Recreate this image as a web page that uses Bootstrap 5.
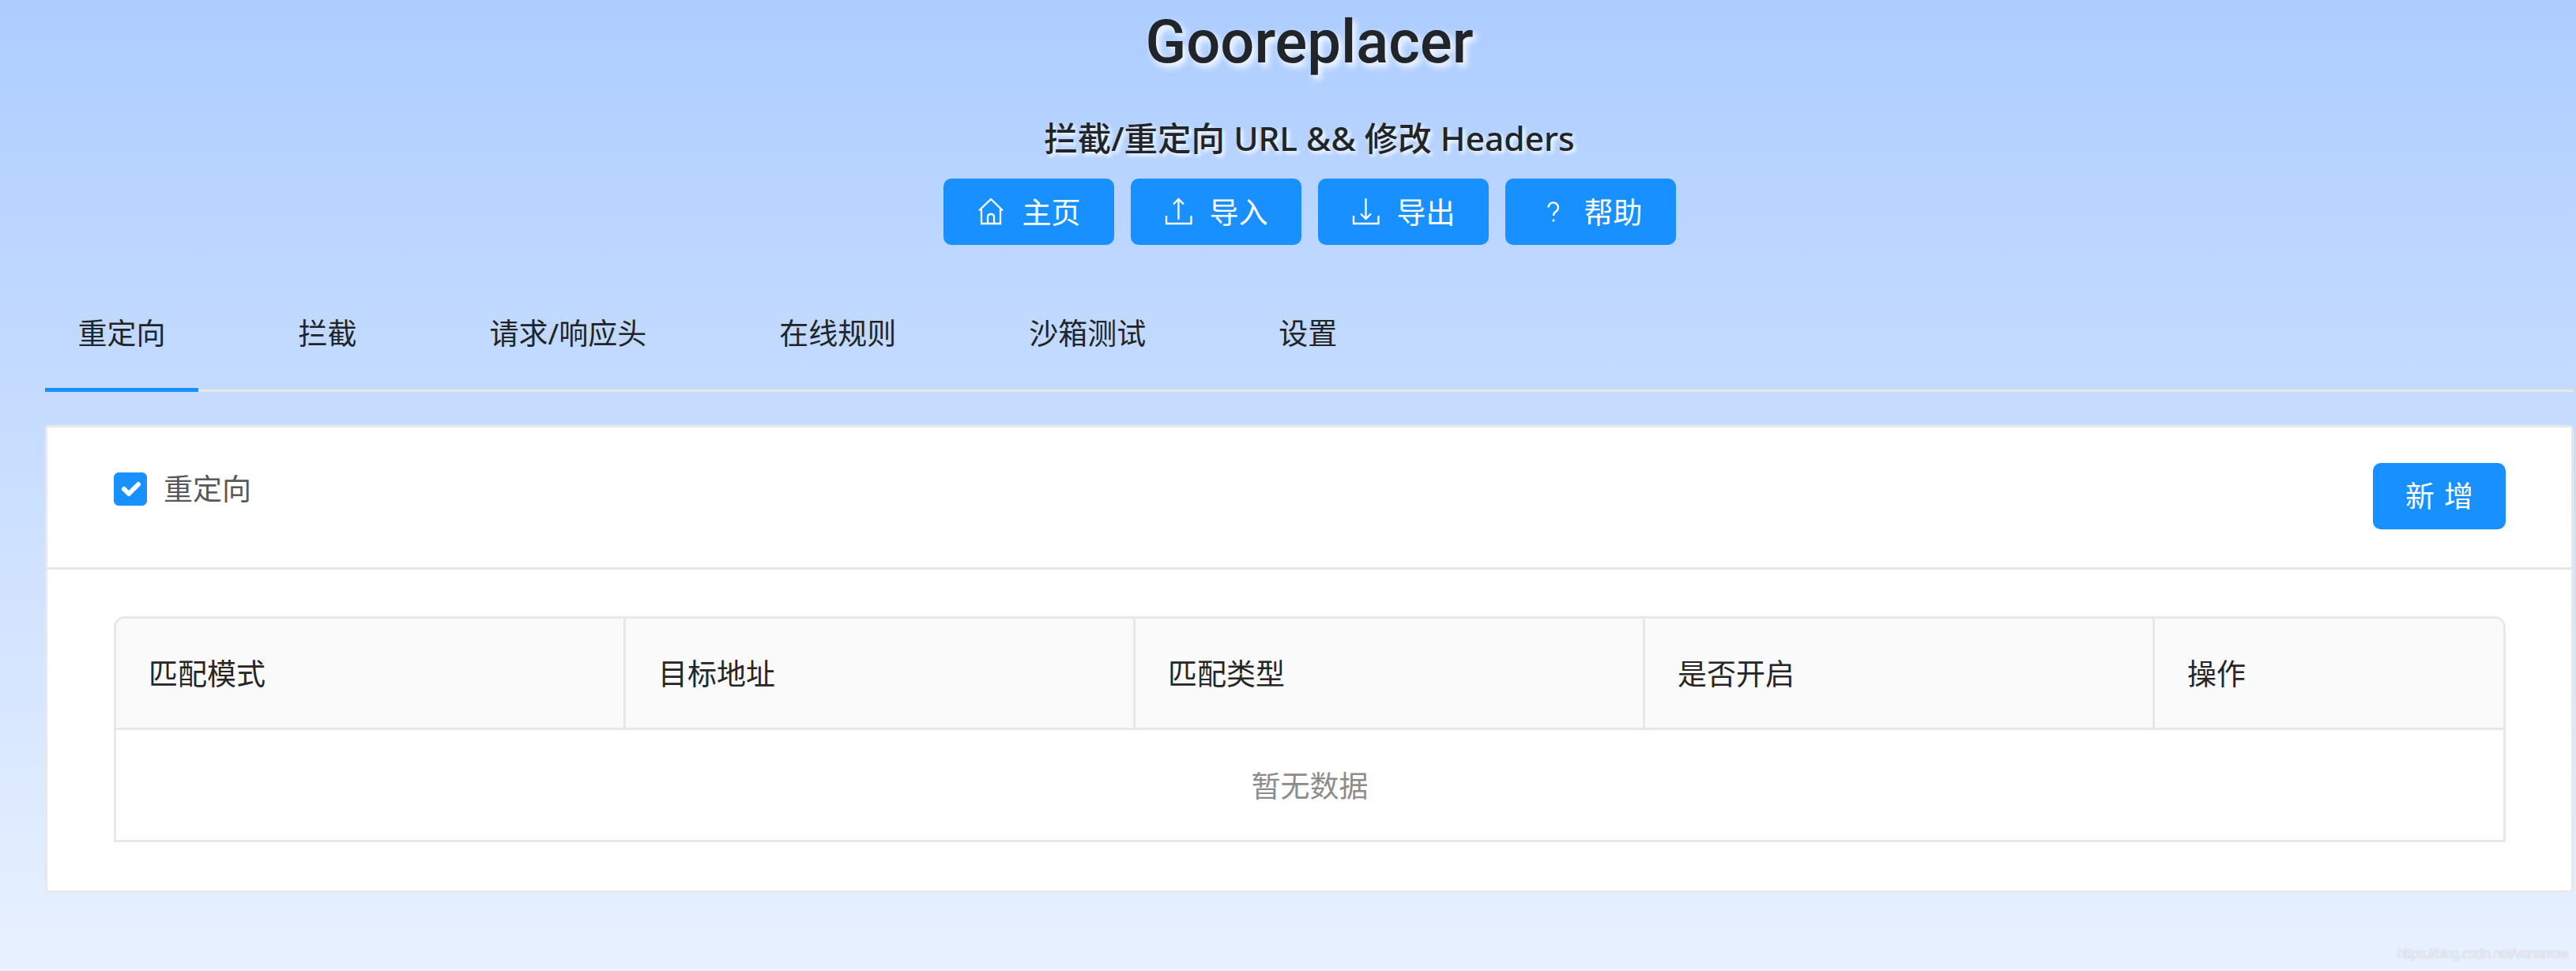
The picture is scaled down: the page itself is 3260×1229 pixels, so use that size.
<!DOCTYPE html>
<html lang="zh-CN">
<head>
    <meta charset="UTF-8">
    <meta name="viewport" content="width=device-width, initial-scale=1.0">
    <title>Gooreplacer</title>
    <link href="https://cdn.jsdelivr.net/npm/bootstrap@5.3.0/dist/css/bootstrap.min.css" rel="stylesheet">
    <style>
        html, body { height: 100%; }
        body {
            font-family: "Noto Sans", "Noto Sans CJK SC", sans-serif;
            background: linear-gradient(180deg, #adcdff 0%, #e8f1ff 100%);
            padding: 0 3px 0 57px;
            position: relative;
            overflow: hidden;
        }
        .site-title {
            font-family: Roboto, "Noto Sans", sans-serif;
            font-size: 76px;
            font-weight: 500;
            line-height: 107px;
            margin: 0;
            text-shadow: 4px 5px 8px #fff;
        }
        .site-sub {
            font-size: 42.500px;
            font-weight: 500;
            line-height: 56px;
            margin: 40px 0 23px;
            text-shadow: 3px 3px 5px #fff;
        }
        .top-btns { gap: 21px; }
        .btn-ant {
            background: #1890ff;
            border: 0;
            border-radius: 10px;
            color: #fff;
            font-size: 37px;
            line-height: 1;
            height: 84px;
            padding: 0 42px 0 43px;
        }
        .btn-ant:hover { background: #1890ff; color: #fff; }
        .btn-ant svg { width: 36px; height: 36px; margin-right: 21px; fill: none; stroke: #fff; stroke-width: 2.300; }
        .btn-add { width: 168px; padding: 0; letter-spacing: 12px; text-indent: 12px; margin-bottom: 4px; }
        .tabs { margin-top: 39px; border-bottom: 3px solid #e8e8e8; gap: 85px; }
        .tabs .nav-link {
            border: 0;
            border-bottom: 5px solid transparent;
            margin-bottom: -3px;
            background: none;
            color: #212529;
            font-size: 37px;
            line-height: 50px;
            padding: 48px 41.500px 44px;
        }
        .tabs .nav-link.active { border-bottom-color: #1890ff; }
        .rule-card {
            margin-top: 42px;
            border: 3px solid #e8e8e8;
            border-radius: 5px;
            height: 592px;
        }
        .rule-head {
            background: #fff;
            border-bottom: 3px solid #e8e8e8;
            height: 180px;
            padding: 0 83px 0 84px;
        }
        .rule-check { font-size: 37px; color: #595959; gap: 21px; margin: 0 0 22px; padding: 0; min-height: 0; }
        .rule-check .form-check-input {
            width: 42px; height: 42px; margin: 0; float: none;
            background-color: #1890ff; border-color: #1890ff; border-radius: 6px;
        }
        .rule-body { padding: 59px 83px 0 84px; }
        .rule-wrap { border: 3px solid #e8e8e8; border-radius: 14px 14px 0 0; overflow: hidden; }
        .rule-table { table-layout: fixed; width: 100%; border-collapse: separate; border-spacing: 0; margin: 0; }
        .rule-table .w-col { width: 645px; }
        .rule-table th {
            background: #fafafa;
            color: #262626;
            font-size: 37px;
            font-weight: 400;
            height: 141px;
            padding: 2px 41px 0;
            border-right: 3px solid #e8e8e8;
            border-bottom: 3px solid #e8e8e8;
            vertical-align: middle;
        }
        .rule-table th:last-child { border-right: 0; }
        .rule-table td {
            color: #8c8c8c;
            font-size: 37px;
            height: 139px;
            padding: 2px 0 0;
            border: 0;
            text-align: center;
            vertical-align: middle;
        }
        .watermark {
            position: absolute;
            right: 10px;
            bottom: 8px;
            font-family: "Liberation Sans", sans-serif;
            font-size: 18px;
            letter-spacing: -.8px;
            color: rgba(255, 255, 255, .8);
            text-shadow: 0 0 1px rgba(110, 120, 140, .6);
        }
    </style>
</head>
<body>
    <header class="text-center">
        <h1 class="site-title">Gooreplacer</h1>
        <h4 class="site-sub">拦截/重定向 URL &amp;&amp; 修改 Headers</h4>
        <div class="d-flex justify-content-center top-btns">
            <button class="btn btn-ant d-inline-flex align-items-center">
                <svg viewBox="0 0 36 36"><path d="M2 16.5 17 2l15 14.500M5 14v19h24V14M13 33V24.500q0-3.500 4-3.500t4 3.500V33"/></svg>主页
            </button>
            <button class="btn btn-ant d-inline-flex align-items-center">
                <svg viewBox="0 0 36 36"><path d="M2 23v10h31.500V23M17.500 2v26M11 8.500 17.500 2 24 8.500"/></svg>导入
            </button>
            <button class="btn btn-ant d-inline-flex align-items-center">
                <svg viewBox="0 0 36 36"><path d="M2 23v10h31.500V23M17.500 1v26M11 20.500 17.500 27 24 20.500"/></svg>导出
            </button>
            <button class="btn btn-ant d-inline-flex align-items-center">
                <svg viewBox="0 0 36 36"><path d="M11.500 12.500a6.200 6.200 0 1 1 9.500 5.300c-2.200 1.500-3 2.700-3 5.200M18 27.500v3"/></svg>帮助
            </button>
        </div>
    </header>

    <ul class="nav tabs">
        <li class="nav-item"><a class="nav-link active" href="#">重定向</a></li>
        <li class="nav-item"><a class="nav-link" href="#">拦截</a></li>
        <li class="nav-item"><a class="nav-link" href="#">请求/响应头</a></li>
        <li class="nav-item"><a class="nav-link" href="#">在线规则</a></li>
        <li class="nav-item"><a class="nav-link" href="#">沙箱测试</a></li>
        <li class="nav-item"><a class="nav-link" href="#">设置</a></li>
    </ul>

    <div class="card rule-card">
        <div class="rule-head d-flex align-items-center justify-content-between">
            <div class="form-check d-flex align-items-center rule-check">
                <input class="form-check-input" type="checkbox" id="redirect-on" checked>
                <label class="form-check-label" for="redirect-on">重定向</label>
            </div>
            <button class="btn btn-ant btn-add">新增</button>
        </div>
        <div class="rule-body">
            <div class="rule-wrap">
                <table class="table rule-table">
                    <colgroup>
                        <col class="w-col"><col class="w-col"><col class="w-col"><col class="w-col"><col>
                    </colgroup>
                    <thead>
                        <tr><th>匹配模式</th><th>目标地址</th><th>匹配类型</th><th>是否开启</th><th>操作</th></tr>
                    </thead>
                    <tbody>
                        <tr><td colspan="5">暂无数据</td></tr>
                    </tbody>
                </table>
            </div>
        </div>
    </div>
    <span class="watermark">https://blog.csdn.net/vanarrow</span>

    <script src="https://cdn.jsdelivr.net/npm/bootstrap@5.3.0/dist/js/bootstrap.bundle.min.js"></script>
</body>
</html>
